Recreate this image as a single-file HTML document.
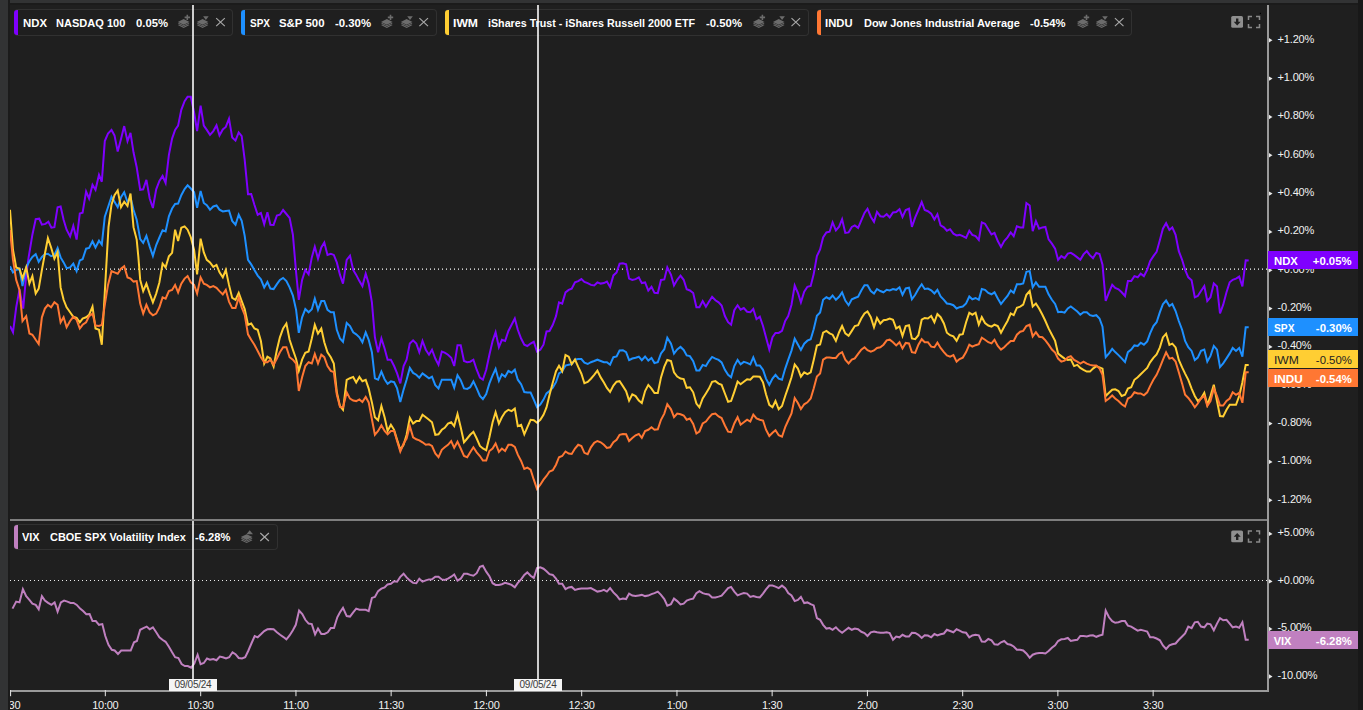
<!DOCTYPE html>
<html><head><meta charset="utf-8"><title>chart</title>
<style>
html,body{margin:0;padding:0;background:#1f1f1f;}
body{width:1363px;height:710px;position:relative;overflow:hidden;font-family:"Liberation Sans",sans-serif;color:#fff;}
.abs{position:absolute;}
#lstrip{left:0;top:0;width:8px;height:710px;background:#323334;}
#lgap{left:8px;top:0;width:2px;height:710px;background:#1b1b1b;}
#tstrip{left:10px;top:0;width:1348px;height:3px;background:#323334;}
#tgap{left:10px;top:3px;width:1348px;height:2px;background:#1b1b1b;}
#rstrip{left:1358px;top:0;width:5px;height:710px;background:#181818;}
.lg{position:absolute;box-sizing:border-box;border:1px solid #313131;border-left:none;border-radius:4px;background:#1f1f1f;}
.lg i{position:absolute;left:0;top:0;bottom:0;width:4px;border-radius:3px 0 0 3px;}
.lt{position:absolute;font-size:11px;font-weight:bold;white-space:pre;color:#fff;transform-origin:0 50%;}
.yl{position:absolute;left:1277.5px;font-size:11px;letter-spacing:-0.15px;color:#f2f2f2;white-space:pre;height:14px;line-height:14px;}
.xl{position:absolute;top:697.75px;font-size:11px;letter-spacing:-0.25px;color:#f2f2f2;white-space:pre;height:14px;line-height:14px;transform:translateX(-50%);}
.tag{position:absolute;left:1268px;width:90px;height:18px;line-height:18px;font-size:11px;font-weight:bold;color:#fff;}
.tag b{position:absolute;left:5.7px;top:1px;font-weight:bold;}
.tag em{position:absolute;right:6px;top:1px;font-style:normal;font-weight:bold;}
.db{position:absolute;top:679px;width:47px;height:12px;background:#f5f5f5;color:#3a3a3a;font-size:10px;letter-spacing:-0.25px;line-height:12px;text-align:center;}
svg{position:absolute;left:0;top:0;}
</style></head><body>
<div class="abs" id="lstrip"></div><div class="abs" id="lgap"></div>
<div class="abs" id="tstrip"></div><div class="abs" id="tgap"></div>
<div class="abs" id="rstrip"></div>

<div class="lg" style="left:14px;top:9px;width:219px;height:27px"><i style="background:#7f00ff"></i></div><span class="lt" style="left:22.5px;top:10px;height:26px;line-height:26px;transform:scaleX(1.033)">NDX</span><span class="lt" style="left:56.4px;top:10px;height:26px;line-height:26px;transform:scaleX(1.003)">NASDAQ 100</span><span class="lt" style="left:135.7px;top:10px;height:26px;line-height:26px;transform:scaleX(1.026)">0.05%</span>
<div class="lg" style="left:241px;top:9px;width:196px;height:27px"><i style="background:#1e90ff"></i></div><span class="lt" style="left:249.5px;top:10px;height:26px;line-height:26px;transform:scaleX(0.908)">SPX</span><span class="lt" style="left:279.4px;top:10px;height:26px;line-height:26px;transform:scaleX(1.038)">S&amp;P 500</span><span class="lt" style="left:335.3px;top:10px;height:26px;line-height:26px;transform:scaleX(1.033)">-0.30%</span>
<div class="lg" style="left:445px;top:9px;width:364px;height:27px"><i style="background:#ffce33"></i></div><span class="lt" style="left:452.6px;top:10px;height:26px;line-height:26px;transform:scaleX(1.106)">IWM</span><span class="lt" style="left:488px;top:10px;height:26px;line-height:26px;transform:scaleX(0.973)">iShares Trust - iShares Russell 2000 ETF</span><span class="lt" style="left:706px;top:10px;height:26px;line-height:26px;transform:scaleX(1.033)">-0.50%</span>
<div class="lg" style="left:817px;top:9px;width:314.5px;height:27px"><i style="background:#ff7733"></i></div><span class="lt" style="left:825.3px;top:10px;height:26px;line-height:26px;transform:scaleX(1.023)">INDU</span><span class="lt" style="left:863.9px;top:10px;height:26px;line-height:26px;transform:scaleX(0.997)">Dow Jones Industrial Average</span><span class="lt" style="left:1030.2px;top:10px;height:26px;line-height:26px;transform:scaleX(1.021)">-0.54%</span>
<div class="lg" style="left:14px;top:524px;width:264px;height:26px"><i style="background:#c080c0"></i></div><span class="lt" style="left:22.2px;top:524px;height:26px;line-height:26px;transform:scaleX(0.998)">VIX</span><span class="lt" style="left:49.7px;top:524px;height:26px;line-height:26px;transform:scaleX(0.993)">CBOE SPX Volatility Index</span><span class="lt" style="left:195.2px;top:524px;height:26px;line-height:26px;transform:scaleX(1.016)">-6.28%</span>
<div class="yl" style="top:31.75px">+1.20%</div>
<div class="yl" style="top:69.75px">+1.00%</div>
<div class="yl" style="top:107.75px">+0.80%</div>
<div class="yl" style="top:146.75px">+0.60%</div>
<div class="yl" style="top:184.75px">+0.40%</div>
<div class="yl" style="top:222.75px">+0.20%</div>
<div class="yl" style="top:261.75px">+0.00%</div>
<div class="yl" style="top:299.75px">-0.20%</div>
<div class="yl" style="top:337.75px">-0.40%</div>
<div class="yl" style="top:376.75px">-0.60%</div>
<div class="yl" style="top:414.75px">-0.80%</div>
<div class="yl" style="top:452.75px">-1.00%</div>
<div class="yl" style="top:491.75px">-1.20%</div>
<div class="yl" style="top:524.75px">+5.00%</div>
<div class="yl" style="top:572.75px">+0.00%</div>
<div class="yl" style="top:619.75px">-5.00%</div>
<div class="yl" style="top:667.75px">-10.00%</div>
<div class="xl" style="left:10.1px">9:30</div>
<div class="xl" style="left:105.3px">10:00</div>
<div class="xl" style="left:200.6px">10:30</div>
<div class="xl" style="left:295.9px">11:00</div>
<div class="xl" style="left:391.1px">11:30</div>
<div class="xl" style="left:486.4px">12:00</div>
<div class="xl" style="left:581.6px">12:30</div>
<div class="xl" style="left:676.9px">1:00</div>
<div class="xl" style="left:772.1px">1:30</div>
<div class="xl" style="left:867.4px">2:00</div>
<div class="xl" style="left:962.6px">2:30</div>
<div class="xl" style="left:1057.8px">3:00</div>
<div class="xl" style="left:1153.1px">3:30</div>
<div class="abs" style="left:8px;top:692px;width:2px;height:18px;background:#1b1b1b"></div><div class="abs" style="left:0;top:692px;width:8px;height:18px;background:#323334"></div>
<svg width="1363" height="710" viewBox="0 0 1363 710">
<line x1="10" y1="269.2" x2="1268" y2="269.2" stroke="#ffffff" stroke-width="1.3" stroke-dasharray="1 3"/>
<line x1="10" y1="580.5" x2="1268" y2="580.5" stroke="#ececec" stroke-width="1" stroke-dasharray="1 3"/>
<clipPath id="cp"><rect x="10" y="5" width="1258" height="686"/></clipPath><g clip-path="url(#cp)">
<polyline points="10.0,326.0 13.0,332.3 16.2,307.3 19.5,289.4 23.2,308.6 26.2,274.9 28.7,256.9 32.4,234.7 35.7,219.2 39.2,218.7 41.9,224.7 45.4,223.9 48.4,221.7 51.4,227.7 54.4,227.2 57.6,207.2 60.6,206.5 63.6,219.7 66.6,229.7 70.1,236.4 73.3,225.9 76.6,239.6 79.8,213.5 82.6,212.7 86.1,191.5 89.1,198.5 92.5,184.8 95.5,189.8 99.0,174.8 101.8,181.8 104.8,141.1 108.0,133.6 111.5,129.9 114.5,135.4 117.7,151.6 121.0,139.1 124.2,126.1 127.5,141.1 130.5,132.9 133.5,152.3 136.7,167.3 140.2,189.8 143.2,189.3 146.4,179.8 149.7,198.5 152.9,208.0 156.2,189.3 159.4,181.0 162.6,176.0 165.6,183.0 168.9,154.8 172.1,138.6 175.1,129.9 178.1,125.6 181.3,109.9 184.6,101.2 187.6,96.7 190.8,96.7 194.1,112.4 197.1,131.1 200.6,105.7 203.8,125.6 206.8,129.9 210.0,134.9 213.3,131.1 216.5,125.4 219.5,135.4 222.8,129.4 225.8,126.9 229.0,118.7 232.2,137.4 235.5,140.6 238.7,132.4 241.7,136.1 244.7,159.8 248.0,194.2 251.2,194.0 254.4,204.7 257.7,214.7 260.9,213.0 264.2,224.2 267.4,212.2 270.4,224.7 273.6,224.9 276.9,215.5 279.9,214.7 283.1,210.0 286.4,214.0 289.6,217.9 292.9,234.7 296.1,272.4 298.8,299.8 302.1,279.9 305.3,269.9 308.6,274.4 311.8,257.4 314.8,246.7 318.0,258.7 321.3,247.5 324.3,242.5 327.5,254.9 330.8,253.7 333.8,254.9 336.8,262.4 340.0,274.9 343.0,283.6 346.7,259.9 350.0,255.7 353.2,269.9 356.2,274.9 359.4,281.1 362.4,286.1 365.7,273.7 368.7,283.6 371.9,302.3 374.9,337.3 378.1,352.2 381.4,338.5 384.6,348.5 387.6,359.7 390.9,359.7 394.1,366.0 397.1,373.4 400.3,383.4 403.6,366.0 406.6,359.7 409.8,343.5 413.1,340.3 416.3,343.5 419.3,352.2 422.5,341.0 425.8,349.7 429.0,354.7 432.0,349.7 435.3,358.5 438.5,364.7 441.8,351.5 444.7,352.7 448.0,354.7 451.2,357.7 454.2,366.0 457.5,345.2 460.7,345.2 464.0,361.0 467.2,362.2 470.2,361.7 473.4,359.7 476.7,369.7 479.9,377.7 482.9,379.7 486.2,369.7 489.4,354.7 492.6,341.0 495.6,332.3 498.9,347.2 501.9,339.8 505.1,341.0 508.4,331.0 511.6,324.8 514.8,318.6 517.8,329.8 521.1,338.5 524.3,344.7 527.3,346.0 530.6,343.5 533.8,341.8 537.0,351.5 540.3,349.7 543.5,344.7 546.5,331.5 549.5,331.0 552.8,324.8 556.0,316.1 559.0,302.3 562.2,303.6 565.5,292.4 568.7,289.9 571.7,288.6 575.0,282.4 578.2,281.1 581.4,279.1 584.4,281.9 587.7,283.1 590.9,284.9 594.2,285.4 597.4,282.4 600.7,283.6 603.9,283.1 606.9,281.6 610.1,286.9 613.4,275.4 616.6,272.4 619.6,263.7 622.9,263.2 626.1,264.2 629.1,278.6 632.3,279.9 635.6,279.1 638.8,277.4 641.8,283.1 645.1,282.4 648.3,290.6 651.5,286.9 654.5,292.9 657.8,293.1 661.0,279.9 664.3,279.4 667.3,267.4 671.0,274.8 674.0,285.5 677.2,279.8 680.5,275.6 683.7,279.8 686.7,289.3 689.9,290.5 693.2,293.0 696.4,307.2 699.4,307.2 702.7,301.0 705.9,306.7 708.9,301.8 712.1,296.8 715.4,300.3 718.6,302.3 721.6,305.5 724.9,316.0 728.1,322.2 731.1,324.7 734.3,310.2 737.6,305.2 740.6,309.7 743.8,308.0 747.1,311.7 750.3,312.2 753.3,309.0 756.5,319.2 759.8,316.7 763.0,326.0 766.0,337.2 769.3,349.6 772.5,337.2 775.5,332.9 778.7,332.9 782.0,330.9 785.2,321.0 788.2,316.0 791.5,304.7 794.7,285.5 797.9,292.8 800.9,302.3 804.2,291.8 807.4,286.8 810.7,286.0 813.7,274.1 816.9,256.1 820.1,249.4 823.1,237.4 826.4,232.4 829.6,231.7 832.6,222.4 835.9,230.4 839.1,226.7 842.1,219.2 845.3,232.9 848.6,232.4 851.8,226.9 854.8,225.4 858.1,227.9 861.3,220.4 864.5,212.9 867.5,208.7 870.8,216.7 874.0,221.9 877.0,212.0 880.3,216.2 883.5,216.7 886.7,214.2 889.7,217.4 893.0,212.5 896.2,212.0 899.5,209.2 902.5,216.9 905.7,210.0 909.0,208.7 911.9,226.9 915.2,217.4 918.4,210.0 921.7,202.0 924.7,210.0 927.9,211.2 931.2,213.7 934.4,219.4 937.4,214.2 940.6,225.4 943.9,227.4 946.9,230.7 950.1,229.2 953.4,233.7 956.6,235.4 959.6,234.9 962.8,236.1 966.1,237.9 969.3,230.7 972.3,234.9 975.6,236.1 978.8,239.9 981.8,222.4 985.0,223.7 988.3,229.2 991.5,234.4 994.5,232.9 997.8,241.1 1001.0,246.9 1004.2,241.1 1007.5,237.4 1010.7,232.4 1013.7,236.1 1016.9,226.2 1020.2,227.4 1023.2,227.4 1026.4,203.0 1029.7,205.5 1032.7,231.2 1035.9,221.2 1039.1,228.7 1042.4,227.4 1045.4,226.9 1048.6,239.4 1051.9,243.6 1055.1,248.6 1058.1,259.8 1061.3,256.1 1064.6,258.1 1067.8,253.6 1070.8,252.9 1074.1,254.9 1077.3,257.4 1080.3,259.8 1083.5,254.4 1086.8,251.1 1090.0,255.4 1093.0,258.1 1096.3,252.9 1099.5,254.1 1102.5,264.8 1105.7,301.0 1109.0,292.3 1112.2,284.8 1115.2,288.0 1118.5,289.3 1121.7,292.3 1125.0,296.0 1127.9,281.0 1131.2,281.0 1134.4,276.1 1137.7,277.3 1140.7,273.6 1143.9,276.1 1147.2,269.8 1150.1,261.1 1153.4,256.1 1156.6,251.9 1159.9,239.9 1162.9,228.7 1166.1,223.2 1169.4,229.9 1172.3,227.4 1175.6,234.9 1178.8,251.1 1182.1,259.8 1185.1,269.8 1188.3,277.3 1191.6,280.3 1194.8,297.3 1197.8,296.0 1201.0,291.0 1204.3,286.0 1207.3,301.0 1210.5,297.3 1213.8,283.5 1217.0,286.5 1220.0,313.5 1223.2,304.7 1226.5,292.3 1229.7,282.3 1232.7,279.8 1236.0,278.6 1239.2,276.6 1242.4,286.5 1245.7,260.3 1248.7,260.6" fill="none" stroke="#7f00ff" stroke-width="2" stroke-linejoin="miter" stroke-miterlimit="4" stroke-linecap="butt"/>
<polyline points="10.0,266.2 13.0,272.4 16.2,269.9 19.5,268.7 22.5,286.1 26.2,267.4 29.4,261.2 32.4,256.9 35.7,254.2 38.7,261.9 41.9,256.9 44.9,254.2 47.9,253.7 51.1,256.2 54.4,254.9 57.6,248.0 60.6,257.4 63.6,262.4 66.6,268.2 70.1,267.4 73.3,263.7 76.6,271.2 79.8,260.4 82.6,259.2 86.1,248.7 89.1,248.0 92.5,241.2 95.5,247.5 99.0,240.7 101.8,244.5 104.8,216.7 108.0,207.2 111.5,196.7 114.5,201.7 117.7,207.2 121.0,197.2 124.2,192.3 127.5,202.2 130.5,197.2 133.5,209.7 136.7,219.7 140.2,239.1 143.2,242.9 146.4,235.9 149.7,246.6 152.9,255.9 156.2,245.0 159.4,237.5 162.6,230.2 165.6,231.4 168.9,216.4 172.1,208.5 175.1,204.0 178.1,203.5 181.3,195.2 184.6,189.0 187.6,185.3 190.8,188.5 194.1,192.3 197.1,207.7 200.6,191.0 203.8,203.0 206.8,205.2 210.0,209.7 213.3,206.5 216.5,205.5 219.5,209.7 222.8,211.5 225.8,211.0 229.0,210.5 232.2,220.9 235.5,224.7 238.7,214.7 241.7,220.9 244.7,235.9 248.0,259.9 251.2,264.4 254.4,269.9 257.7,275.6 260.9,279.4 264.2,287.4 267.4,281.9 270.4,288.6 273.6,289.1 276.9,284.1 279.9,279.9 283.1,277.9 286.4,281.1 289.6,287.4 292.9,295.6 296.1,309.8 298.8,332.8 302.1,317.3 305.3,309.1 308.6,312.3 311.8,309.3 314.8,298.6 318.0,309.8 321.3,301.1 324.3,301.1 327.5,309.8 330.8,312.3 333.8,312.3 336.8,329.8 340.0,338.5 343.0,341.8 346.7,323.0 350.0,326.0 353.2,332.3 356.2,334.3 359.4,337.3 362.4,342.3 365.7,332.3 368.7,339.8 371.9,352.2 374.9,378.4 378.1,379.7 381.4,371.7 384.6,379.2 387.6,383.9 390.9,381.4 394.1,382.2 397.1,388.4 400.3,402.1 403.6,389.6 406.6,379.7 409.8,367.9 413.1,372.9 416.3,374.7 419.3,377.7 422.5,373.4 425.8,375.9 429.0,378.4 432.0,376.7 435.3,385.2 438.5,388.4 441.8,379.7 444.7,379.7 448.0,379.7 451.2,379.7 454.2,387.7 457.5,375.2 460.7,380.2 464.0,388.4 467.2,388.9 470.2,387.2 473.4,381.4 476.7,388.4 479.9,395.9 482.9,399.1 486.2,394.1 489.4,383.4 492.6,375.4 495.6,368.9 498.9,380.9 501.9,374.2 505.1,376.7 508.4,370.9 511.6,372.7 514.8,369.7 517.8,379.7 521.1,384.2 524.3,392.1 527.3,392.6 530.6,392.6 533.8,399.6 537.0,407.1 540.3,404.6 543.5,399.6 546.5,393.4 549.5,390.9 552.8,387.7 556.0,382.2 559.0,373.4 562.2,371.4 565.5,365.5 568.7,364.7 571.7,364.2 575.0,359.7 578.2,359.0 581.4,359.0 584.4,362.7 587.7,364.0 590.9,362.2 594.2,361.0 597.4,359.7 600.7,361.0 603.9,362.2 606.9,362.2 610.1,364.7 613.4,357.2 616.6,356.5 619.6,350.5 622.9,350.2 626.1,352.2 629.1,360.2 632.3,358.5 635.6,357.7 638.8,356.7 641.8,360.2 645.1,356.5 648.3,360.5 651.5,358.0 654.5,363.0 657.8,362.2 661.0,353.5 664.3,349.2 667.3,337.8 671.0,343.7 674.0,353.6 677.2,349.4 680.5,346.9 683.7,349.9 686.7,355.4 689.9,356.1 693.2,361.1 696.4,370.6 699.4,370.6 702.7,364.9 705.9,366.1 708.9,361.1 712.1,356.9 715.4,358.6 718.6,359.9 721.6,362.4 724.9,369.8 728.1,374.8 731.1,377.3 734.3,366.1 737.6,359.9 740.6,364.4 743.8,361.9 747.1,362.9 750.3,364.4 753.3,357.4 756.5,365.4 759.8,365.4 763.0,369.8 766.0,378.6 769.3,384.8 772.5,378.6 775.5,374.8 778.7,378.6 782.0,379.8 785.2,368.6 788.2,359.9 791.5,350.6 794.7,338.7 797.9,344.4 800.9,349.9 804.2,343.7 807.4,340.7 810.7,339.2 813.7,329.2 816.9,315.7 820.1,312.5 823.1,299.8 826.4,297.3 829.6,299.0 832.6,295.5 835.9,299.8 839.1,296.8 842.1,292.3 845.3,300.5 848.6,305.2 851.8,299.3 854.8,298.0 858.1,296.8 861.3,290.5 864.5,285.3 867.5,285.3 870.8,291.0 874.0,293.5 877.0,289.0 880.3,291.0 883.5,292.3 886.7,289.8 889.7,290.5 893.0,289.0 896.2,289.8 899.5,287.3 902.5,294.8 905.7,288.5 909.0,287.8 911.9,299.3 915.2,294.8 918.4,289.0 921.7,284.3 924.7,289.0 927.9,288.5 931.2,290.3 934.4,293.5 937.4,289.8 940.6,296.5 943.9,299.8 946.9,303.5 950.1,304.0 953.4,305.2 956.6,308.5 959.6,307.2 962.8,306.5 966.1,303.5 969.3,296.5 972.3,299.3 975.6,298.0 978.8,299.8 981.8,289.0 985.0,289.8 988.3,293.0 991.5,294.3 994.5,292.3 997.8,298.5 1001.0,304.0 1004.2,299.8 1007.5,296.0 1010.7,290.5 1013.7,292.8 1016.9,284.3 1020.2,284.3 1023.2,283.5 1026.4,271.8 1029.7,271.1 1032.7,287.3 1035.9,282.3 1039.1,286.8 1042.4,286.8 1045.4,286.8 1048.6,294.3 1051.9,299.8 1055.1,304.0 1058.1,312.2 1061.3,311.7 1064.6,312.7 1067.8,308.5 1070.8,306.5 1074.1,309.0 1077.3,311.5 1080.3,314.7 1083.5,312.2 1086.8,312.2 1090.0,315.2 1093.0,316.0 1096.3,315.2 1099.5,318.5 1102.5,326.7 1105.7,357.1 1109.0,353.4 1112.2,348.9 1115.2,352.1 1118.5,355.1 1121.7,358.4 1125.0,362.1 1127.9,352.1 1131.2,349.6 1134.4,345.4 1137.7,345.9 1140.7,342.7 1143.9,344.7 1147.2,341.4 1150.1,333.4 1153.4,326.0 1156.6,322.2 1159.9,312.2 1162.9,304.2 1166.1,300.5 1169.4,306.0 1172.3,304.0 1175.6,311.0 1178.8,321.0 1182.1,329.7 1185.1,340.9 1188.3,347.2 1191.6,350.9 1194.8,360.1 1197.8,357.6 1201.0,350.9 1204.3,349.6 1207.3,361.6 1210.5,355.9 1213.8,345.9 1217.0,349.6 1220.0,367.1 1223.2,363.4 1226.5,358.4 1229.7,353.4 1232.7,347.9 1236.0,350.9 1239.2,347.9 1242.4,356.6 1245.7,327.2 1248.7,327.2" fill="none" stroke="#1e90ff" stroke-width="2" stroke-linejoin="miter" stroke-miterlimit="4" stroke-linecap="butt"/>
<polyline points="10.0,209.7 13.0,250.0 16.2,267.4 19.5,268.7 22.5,278.6 26.2,267.4 29.4,283.6 32.4,276.1 35.7,293.6 38.7,288.6 41.9,269.9 44.9,253.7 47.9,238.2 51.1,247.5 54.4,258.7 57.6,252.0 60.6,287.4 63.6,299.8 66.6,307.3 70.1,312.3 73.3,316.8 76.6,317.8 79.8,322.3 82.6,318.6 86.1,317.3 89.1,314.8 92.5,306.6 95.5,328.5 99.0,329.8 101.8,344.7 104.8,292.4 108.5,227.2 111.5,204.7 114.5,195.2 117.7,190.5 121.0,207.2 124.2,201.7 127.5,206.0 130.5,193.5 133.5,227.2 136.7,239.6 138.4,257.4 140.2,279.9 143.2,291.1 146.4,283.6 149.7,293.6 152.9,302.3 156.2,293.6 159.4,282.4 162.6,263.7 165.6,267.4 168.9,256.2 172.1,252.9 175.1,229.7 178.1,240.9 181.3,227.7 184.6,226.4 187.6,229.7 190.8,237.2 194.1,250.0 197.1,274.4 200.6,238.7 203.8,252.5 206.8,259.9 210.0,262.4 213.3,266.9 216.5,264.9 219.5,272.4 222.8,277.4 225.8,269.9 229.0,284.9 232.2,297.9 235.5,299.8 238.7,292.9 241.7,301.1 244.7,309.1 248.0,324.8 251.2,323.5 254.4,328.5 257.7,329.8 260.9,341.0 264.2,363.5 267.4,356.7 270.4,358.5 273.6,366.4 276.9,349.7 279.9,337.3 283.1,328.5 286.4,323.5 289.6,339.8 292.9,349.7 296.1,359.0 298.8,370.9 302.1,359.7 305.3,352.7 308.6,351.5 311.8,338.5 314.8,324.8 318.0,333.5 321.3,328.5 324.3,342.3 327.5,352.2 330.8,357.2 333.8,363.5 336.8,392.1 340.0,406.1 343.0,409.8 346.7,379.9 350.0,378.2 353.2,376.9 356.2,382.4 359.4,376.9 362.4,381.2 365.7,379.9 368.7,388.6 371.9,402.4 374.9,417.3 378.1,420.3 381.4,406.1 384.6,417.3 387.6,431.0 390.9,424.8 394.1,429.8 397.1,439.8 400.3,449.8 403.6,444.8 406.6,434.8 409.8,417.8 413.1,423.6 416.3,421.1 419.3,421.1 422.5,414.8 425.8,417.3 429.0,419.8 432.0,422.3 435.3,434.8 438.5,434.3 441.8,429.8 444.7,427.8 448.0,423.6 451.2,422.3 454.2,426.1 457.5,414.1 460.7,427.3 464.0,442.3 467.2,438.5 470.2,434.8 473.4,431.8 476.7,438.5 479.9,446.0 482.9,448.5 486.2,450.3 489.4,437.3 492.6,422.3 495.6,412.3 498.9,423.6 501.9,417.3 505.1,412.3 508.4,409.8 511.6,411.1 514.8,408.6 517.8,426.1 521.1,424.8 524.3,434.3 527.3,427.3 530.6,419.8 533.8,420.3 537.0,422.8 540.3,419.8 543.5,414.8 546.5,407.4 549.5,394.9 552.8,382.4 556.0,371.2 559.0,365.7 562.2,371.2 565.5,355.0 568.7,356.7 571.7,364.2 575.0,359.5 578.2,366.9 581.4,373.7 584.4,383.2 587.7,381.9 590.9,378.7 594.2,374.9 597.4,370.7 600.7,377.4 603.9,382.4 606.9,387.9 610.1,391.9 613.4,385.6 616.6,381.7 619.6,381.2 622.9,386.1 626.1,391.1 629.1,400.6 632.3,394.4 635.6,396.1 638.8,400.6 641.8,403.1 645.1,391.1 648.3,384.9 651.5,388.6 654.5,393.1 657.8,393.1 661.0,377.4 664.3,366.7 667.3,360.0 671.0,361.1 674.0,372.3 677.2,376.6 680.5,378.6 683.7,379.1 686.7,387.8 689.9,387.3 693.2,392.3 696.4,403.5 699.4,407.3 702.7,398.5 705.9,393.5 708.9,388.6 712.1,381.8 715.4,381.1 718.6,383.6 721.6,384.8 724.9,393.5 728.1,401.8 731.1,401.0 734.3,391.8 737.6,381.6 740.6,384.3 743.8,381.8 747.1,379.3 750.3,379.8 753.3,376.6 756.5,376.6 759.8,376.8 763.0,382.3 766.0,394.3 769.3,404.8 772.5,407.3 775.5,401.0 778.7,409.3 782.0,406.0 785.2,396.0 788.2,387.3 791.5,377.3 794.7,364.4 797.9,368.6 800.9,376.6 804.2,372.3 807.4,374.1 810.7,372.3 813.7,359.9 816.9,345.6 820.1,344.4 823.1,332.7 826.4,330.9 829.6,333.4 832.6,334.7 835.9,340.9 839.1,332.2 842.1,326.0 845.3,333.4 848.6,335.9 851.8,330.9 854.8,326.0 858.1,325.2 861.3,318.5 864.5,313.5 867.5,311.5 870.8,317.2 874.0,327.2 877.0,318.0 880.3,323.5 883.5,320.2 886.7,319.7 889.7,318.5 893.0,319.7 896.2,328.4 899.5,326.4 902.5,335.9 905.7,326.0 909.0,325.2 911.9,338.4 915.2,339.2 918.4,335.2 921.7,319.7 924.7,318.0 927.9,318.5 931.2,316.0 934.4,322.2 937.4,314.0 940.6,317.2 943.9,323.5 946.9,332.7 950.1,335.2 953.4,336.4 956.6,340.9 959.6,334.7 962.8,334.2 966.1,322.2 969.3,312.7 972.3,314.7 975.6,312.7 978.8,324.7 981.8,317.2 985.0,323.0 988.3,325.5 991.5,326.7 994.5,324.7 997.8,326.0 1001.0,332.7 1004.2,326.7 1007.5,321.0 1010.7,313.5 1013.7,315.2 1016.9,307.7 1020.2,306.7 1023.2,304.7 1026.4,294.8 1029.7,291.0 1032.7,306.5 1035.9,303.5 1039.1,308.5 1042.4,314.7 1045.4,321.0 1048.6,328.4 1051.9,334.7 1055.1,340.9 1058.1,353.6 1061.3,356.1 1064.6,358.6 1067.8,359.9 1070.8,359.4 1074.1,366.1 1077.3,364.9 1080.3,367.9 1083.5,369.8 1086.8,371.6 1090.0,371.6 1093.0,368.6 1096.3,366.1 1099.5,367.4 1102.5,368.6 1105.7,396.0 1109.0,392.8 1112.2,389.8 1115.2,389.3 1118.5,391.0 1121.7,396.0 1125.0,394.8 1127.9,388.6 1131.2,387.3 1134.4,379.8 1137.7,377.3 1140.7,374.3 1143.9,371.1 1147.2,367.9 1150.1,362.4 1153.4,357.9 1156.6,354.4 1159.9,347.4 1162.9,337.4 1166.1,333.7 1169.4,344.9 1172.3,343.7 1175.6,347.4 1178.8,359.9 1182.1,367.4 1185.1,373.6 1188.3,379.8 1191.6,388.6 1194.8,396.0 1197.8,401.0 1201.0,398.5 1204.3,392.8 1207.3,404.8 1210.5,396.0 1213.8,384.8 1217.0,401.0 1220.0,416.0 1223.2,416.5 1226.5,409.8 1229.7,404.8 1232.7,404.8 1236.0,404.8 1239.2,396.0 1242.4,382.3 1245.7,364.9 1248.7,364.9" fill="none" stroke="#ffce33" stroke-width="2" stroke-linejoin="miter" stroke-miterlimit="4" stroke-linecap="butt"/>
<polyline points="10.0,230.0 13.0,259.9 16.2,279.9 19.5,289.9 22.5,321.0 26.2,316.1 29.4,333.5 32.4,334.8 35.7,339.8 38.7,344.0 41.9,317.3 44.9,308.6 47.9,304.8 51.1,307.3 54.4,302.3 57.6,304.8 60.6,322.3 63.6,317.3 66.6,327.3 70.1,321.0 73.3,316.8 76.6,319.8 79.8,328.5 82.6,324.8 86.1,322.3 89.1,316.1 92.5,313.6 95.5,325.5 99.0,326.0 101.8,324.8 104.8,304.8 108.0,284.9 111.5,271.2 114.5,272.4 117.7,273.7 121.0,268.7 124.2,266.2 127.5,277.4 130.5,278.6 133.5,281.6 136.7,281.1 140.2,303.6 143.2,313.6 146.4,304.8 149.7,312.3 152.9,315.3 156.2,313.6 159.4,307.3 162.6,297.4 165.6,298.6 168.9,291.1 172.1,289.9 175.1,284.9 178.1,292.4 181.3,283.6 184.6,278.6 187.6,276.1 190.8,282.4 194.1,284.9 197.1,293.6 200.6,277.4 203.8,283.6 206.8,284.9 210.0,287.4 213.3,286.1 216.5,287.9 219.5,291.1 222.8,294.4 225.8,289.9 229.0,301.6 232.2,308.1 235.5,308.1 238.7,297.4 241.7,307.3 244.7,314.8 248.0,334.3 251.2,339.8 254.4,344.7 257.7,351.0 260.9,357.2 264.2,362.2 267.4,362.2 270.4,359.7 273.6,364.7 276.9,358.5 279.9,352.2 283.1,347.2 286.4,347.2 289.6,357.2 292.9,359.7 296.1,363.5 298.8,390.9 302.1,377.2 305.3,366.0 308.6,362.2 311.8,363.5 314.8,354.0 318.0,363.5 321.3,354.7 324.3,357.2 327.5,366.0 330.8,370.9 333.8,372.2 336.8,394.6 340.0,406.9 343.0,407.4 346.7,392.4 350.0,398.6 353.2,400.6 356.2,401.1 359.4,399.4 362.4,401.9 365.7,396.9 368.7,402.4 371.9,419.3 374.9,434.8 378.1,431.0 381.4,425.3 384.6,431.0 387.6,434.3 390.9,431.0 394.1,431.0 397.1,441.0 400.3,451.5 403.6,443.5 406.6,438.5 409.8,426.1 413.1,437.3 416.3,439.3 419.3,440.3 422.5,442.3 425.8,444.8 429.0,444.3 432.0,446.0 435.3,453.5 438.5,457.2 441.8,449.8 444.7,447.3 448.0,444.8 451.2,441.0 454.2,447.8 457.5,441.8 460.7,448.5 464.0,456.0 467.2,457.2 470.2,452.3 473.4,447.3 476.7,452.3 479.9,456.0 482.9,460.5 486.2,460.5 489.4,451.0 492.6,448.5 495.6,443.5 498.9,451.8 501.9,448.5 505.1,451.0 508.4,444.8 511.6,444.8 514.8,446.8 517.8,454.7 521.1,461.0 524.3,469.0 527.3,467.7 530.6,469.7 533.8,479.7 537.0,488.9 540.3,484.7 543.5,479.7 546.5,476.0 549.5,471.5 552.8,470.2 556.0,464.7 559.0,457.2 562.2,456.0 565.5,451.5 568.7,453.5 571.7,454.0 575.0,448.5 578.2,444.8 581.4,446.0 584.4,452.8 587.7,454.2 590.9,447.3 594.2,442.8 597.4,441.0 600.7,442.3 603.9,444.8 606.9,448.0 610.1,447.3 613.4,442.3 616.6,439.8 619.6,434.8 622.9,434.0 626.1,434.3 629.1,441.0 632.3,438.0 635.6,435.3 638.8,434.0 641.8,437.8 645.1,431.0 648.3,429.8 651.5,427.3 654.5,429.8 657.8,429.3 661.0,419.8 664.3,413.6 667.3,404.1 671.0,409.3 674.0,417.2 677.2,413.5 680.5,414.2 683.7,415.5 686.7,419.7 689.9,418.5 693.2,424.0 696.4,433.5 699.4,431.5 702.7,423.5 705.9,421.5 708.9,417.7 712.1,414.2 715.4,413.5 718.6,416.5 721.6,418.0 724.9,425.5 728.1,431.7 731.1,432.2 734.3,423.5 737.6,417.2 740.6,424.7 743.8,422.2 747.1,419.7 750.3,421.5 753.3,414.7 756.5,418.5 759.8,419.7 763.0,420.5 766.0,429.7 769.3,436.0 772.5,432.7 775.5,430.2 778.7,435.2 782.0,436.7 785.2,427.2 788.2,420.5 791.5,413.5 794.7,398.0 797.9,403.0 800.9,409.0 804.2,404.3 807.4,402.3 810.7,398.5 813.7,388.6 816.9,376.6 820.1,373.6 823.1,359.6 826.4,357.6 829.6,357.6 832.6,357.9 835.9,357.9 839.1,353.9 842.1,352.1 845.3,359.6 848.6,363.4 851.8,359.6 854.8,358.4 858.1,353.9 861.3,349.6 864.5,347.2 867.5,350.1 870.8,351.6 874.0,350.4 877.0,347.9 880.3,347.2 883.5,344.7 886.7,340.4 889.7,339.7 893.0,342.2 896.2,345.4 899.5,342.2 902.5,348.4 905.7,342.9 909.0,343.4 911.9,352.1 915.2,352.9 918.4,344.7 921.7,339.2 924.7,342.2 927.9,342.2 931.2,346.7 934.4,347.2 937.4,342.7 940.6,347.9 943.9,352.1 946.9,355.4 950.1,356.6 953.4,355.1 956.6,361.6 959.6,359.1 962.8,357.6 966.1,352.1 969.3,344.7 972.3,346.7 975.6,345.2 978.8,344.2 981.8,337.7 985.0,339.7 988.3,342.2 991.5,343.4 994.5,339.7 997.8,345.9 1001.0,349.6 1004.2,347.2 1007.5,343.9 1010.7,340.9 1013.7,340.9 1016.9,334.7 1020.2,331.7 1023.2,330.9 1026.4,326.0 1029.7,324.7 1032.7,336.4 1035.9,332.2 1039.1,336.7 1042.4,337.2 1045.4,340.4 1048.6,344.7 1051.9,349.6 1055.1,352.6 1058.1,358.6 1061.3,361.6 1064.6,360.6 1067.8,357.4 1070.8,356.1 1074.1,359.9 1077.3,361.6 1080.3,363.6 1083.5,361.6 1086.8,363.6 1090.0,364.9 1093.0,365.4 1096.3,365.4 1099.5,368.6 1102.5,374.8 1105.7,401.0 1109.0,398.5 1112.2,395.5 1115.2,398.5 1118.5,401.0 1121.7,404.3 1125.0,406.5 1127.9,398.5 1131.2,396.8 1134.4,392.3 1137.7,393.5 1140.7,393.5 1143.9,395.3 1147.2,392.3 1150.1,386.1 1153.4,379.8 1156.6,374.8 1159.9,367.4 1162.9,359.9 1166.1,352.4 1169.4,358.6 1172.3,357.9 1175.6,361.6 1178.8,372.3 1182.1,383.6 1185.1,394.8 1188.3,398.0 1191.6,402.3 1194.8,407.3 1197.8,403.5 1201.0,398.5 1204.3,396.0 1207.3,406.0 1210.5,401.0 1213.8,388.6 1217.0,396.0 1220.0,405.5 1223.2,405.5 1226.5,401.0 1229.7,398.5 1232.7,392.3 1236.0,394.8 1239.2,392.8 1242.4,402.8 1245.7,372.3 1248.7,372.3" fill="none" stroke="#ff7733" stroke-width="2" stroke-linejoin="miter" stroke-miterlimit="4" stroke-linecap="butt"/>
<polyline points="12.5,608.6 16.2,601.6 19.5,602.4 22.9,589.1 26.2,596.1 29.4,599.9 32.4,603.6 35.7,604.9 38.7,609.3 41.9,596.1 44.9,600.6 48.1,602.9 51.4,604.9 54.6,602.4 57.6,611.6 60.9,602.4 64.1,600.6 67.4,601.6 70.6,602.9 73.6,602.9 76.8,604.9 80.1,608.6 83.1,611.1 86.3,614.3 89.6,614.1 92.5,621.1 95.8,621.1 99.0,624.8 102.3,624.1 105.3,636.0 108.5,644.8 111.8,649.8 114.7,650.5 118.0,654.0 121.2,650.5 124.5,650.5 127.5,650.5 130.7,650.5 134.0,642.3 136.9,641.0 140.2,629.8 143.4,628.1 146.7,626.6 149.7,629.3 152.9,627.3 156.2,632.3 159.4,637.3 162.4,639.8 165.6,641.8 168.9,646.8 172.1,652.3 175.1,657.2 178.4,658.0 181.6,664.0 184.8,666.0 187.8,666.0 191.1,667.7 194.3,663.5 197.6,654.7 200.6,664.2 203.8,663.0 207.0,658.5 210.0,659.7 213.3,659.0 216.5,660.2 219.8,656.5 222.8,657.2 226.0,658.5 229.2,657.2 232.5,652.3 235.5,654.2 238.7,658.0 242.0,658.5 245.2,657.2 248.2,651.0 251.4,643.5 254.7,636.0 257.7,637.3 260.9,634.3 264.2,631.0 267.4,629.3 270.4,629.1 273.6,629.3 276.9,632.3 280.1,634.8 283.1,636.8 286.4,639.3 289.6,635.5 292.9,630.3 295.8,624.8 299.1,610.6 302.3,614.1 305.3,619.8 308.6,623.6 311.8,624.1 315.1,634.3 318.0,628.6 321.3,634.0 324.5,634.0 327.8,632.3 330.8,628.1 334.0,628.1 337.3,617.3 340.0,612.3 343.0,607.9 346.7,616.1 350.0,616.6 353.2,612.3 356.2,608.6 359.4,609.8 362.4,609.8 365.7,609.8 368.7,611.1 371.9,597.9 374.9,596.9 378.1,591.1 381.4,588.6 384.6,587.4 387.6,584.4 390.9,583.7 394.1,581.2 397.1,581.7 400.3,576.9 403.6,573.7 406.6,577.4 409.8,580.4 413.1,582.9 416.3,583.2 419.3,578.7 422.5,581.7 425.8,580.4 429.0,579.4 432.0,579.2 435.3,576.7 438.5,576.7 441.8,579.4 444.7,579.9 448.0,578.7 451.2,576.7 454.2,574.4 457.5,580.7 460.7,578.7 464.0,573.7 467.2,573.7 470.2,574.9 473.4,575.7 476.7,573.2 479.9,566.9 482.9,565.7 486.2,571.7 489.4,576.2 492.6,583.2 495.6,584.9 498.9,584.9 501.9,584.2 505.1,582.9 508.4,583.7 511.6,584.9 514.8,587.4 517.8,582.9 521.1,579.4 524.3,574.9 527.3,572.4 530.6,575.7 533.8,577.9 537.0,568.2 540.3,567.4 543.5,568.7 546.5,571.2 549.5,574.2 552.8,574.9 556.0,578.7 559.0,583.7 562.2,583.7 565.5,589.1 568.7,587.4 571.7,586.9 575.0,589.9 578.2,589.1 581.4,588.6 584.4,588.6 587.7,588.6 590.9,588.1 594.2,589.9 597.4,591.6 600.7,591.1 603.9,589.9 606.9,591.6 610.1,588.1 613.4,592.4 616.6,595.4 619.6,599.4 622.9,598.6 626.1,599.1 629.1,593.6 632.3,595.6 635.6,596.1 638.8,595.4 641.8,594.9 645.1,596.1 648.3,595.6 651.5,594.1 654.5,593.1 657.8,591.6 661.0,594.9 664.3,599.1 667.3,605.6 671.0,604.1 674.0,598.6 677.2,601.1 680.5,604.4 683.7,603.6 686.7,600.6 689.9,599.4 693.2,598.6 696.4,593.1 699.4,591.1 702.7,593.1 705.9,594.1 708.9,594.4 712.1,597.4 715.4,597.4 718.6,596.6 721.6,595.6 724.9,591.9 728.1,588.1 731.1,586.9 734.3,591.6 737.6,595.4 740.6,594.1 743.8,593.1 747.1,593.6 750.3,596.9 753.3,596.1 756.5,596.9 759.8,597.4 763.0,593.6 766.0,589.4 769.3,585.6 772.5,585.6 775.5,586.6 778.7,588.1 782.0,585.6 785.2,588.1 788.2,593.1 791.5,595.4 794.7,601.1 797.9,599.9 800.9,596.9 804.2,603.1 807.4,602.4 810.7,604.1 813.7,605.4 816.9,618.1 820.1,619.8 823.1,624.8 826.4,628.6 829.6,628.1 832.6,629.8 835.9,627.3 839.1,630.6 842.1,632.8 845.3,630.3 848.6,627.8 851.8,629.8 854.8,628.6 858.1,629.3 861.3,631.8 864.5,633.0 867.5,636.0 870.8,632.3 874.0,631.5 877.0,632.3 880.3,632.8 883.5,632.8 886.7,632.3 889.7,633.0 893.0,639.8 896.2,636.5 899.5,637.3 902.5,634.8 905.7,636.5 909.0,636.5 911.9,632.8 915.2,633.0 918.4,634.8 921.7,638.0 924.7,635.3 927.9,635.5 931.2,637.3 934.4,634.0 937.4,635.5 940.6,634.3 943.9,633.5 946.9,629.8 950.1,631.0 953.4,632.3 956.6,629.3 959.6,630.6 962.8,632.3 966.1,632.8 969.3,637.3 972.3,635.5 975.6,634.8 978.8,635.3 981.8,641.5 985.0,641.8 988.3,639.0 991.5,640.3 994.5,644.3 997.8,644.8 1001.0,642.3 1004.2,641.0 1007.5,644.0 1010.7,644.8 1013.7,646.5 1016.9,649.8 1020.2,649.8 1023.2,650.5 1026.4,653.5 1029.7,657.7 1032.7,654.7 1035.9,653.5 1039.1,653.0 1042.4,653.0 1045.4,653.5 1048.6,651.0 1051.9,647.8 1055.1,645.3 1058.1,641.0 1061.3,639.3 1064.6,639.0 1067.8,638.0 1070.8,641.0 1074.1,640.3 1077.3,639.8 1080.3,636.0 1083.5,636.0 1086.8,636.5 1090.0,635.5 1093.0,635.3 1096.3,636.8 1099.5,635.5 1102.5,634.8 1105.7,610.6 1109.0,617.3 1112.2,621.1 1115.2,622.8 1118.5,622.3 1121.7,621.1 1125.0,621.1 1127.9,625.6 1131.2,626.6 1134.4,628.6 1137.7,630.6 1140.7,629.8 1143.9,630.6 1147.2,631.5 1150.1,637.3 1153.4,637.3 1156.6,638.5 1159.9,640.3 1162.9,645.5 1166.1,649.0 1169.4,645.3 1172.3,644.3 1175.6,643.5 1178.8,639.8 1182.1,636.5 1185.1,633.5 1188.3,626.6 1191.6,628.1 1194.8,622.3 1197.8,621.8 1201.0,626.6 1204.3,627.3 1207.3,623.6 1210.5,624.3 1213.8,630.3 1217.0,623.6 1220.0,618.1 1223.2,620.3 1226.5,619.8 1229.7,623.6 1232.7,627.3 1236.0,626.6 1239.2,627.8 1242.4,622.3 1245.7,639.8 1248.7,639.8" fill="none" stroke="#c080c0" stroke-width="2" stroke-linejoin="miter" stroke-miterlimit="4" stroke-linecap="butt"/>
</g>
<rect x="192" y="5" width="2" height="686" fill="#ffffff" fill-opacity="0.78"/>
<rect x="537" y="5" width="2" height="686" fill="#ffffff" fill-opacity="0.78"/>
<rect x="10" y="519" width="1258" height="2" fill="#7e7e7e"/>
<rect x="1267" y="5" width="2" height="687" fill="#9a9a9a"/>
<rect x="10" y="690" width="1259" height="2" fill="#9a9a9a"/>
<rect x="10.0" y="690" width="1.1" height="6.2" fill="#d8d8d8"/>
<rect x="104.8" y="690" width="1.1" height="6.2" fill="#d8d8d8"/>
<rect x="200.1" y="690" width="1.1" height="6.2" fill="#d8d8d8"/>
<rect x="295.4" y="690" width="1.1" height="6.2" fill="#d8d8d8"/>
<rect x="390.6" y="690" width="1.1" height="6.2" fill="#d8d8d8"/>
<rect x="485.9" y="690" width="1.1" height="6.2" fill="#d8d8d8"/>
<rect x="581.1" y="690" width="1.1" height="6.2" fill="#d8d8d8"/>
<rect x="676.4" y="690" width="1.1" height="6.2" fill="#d8d8d8"/>
<rect x="771.6" y="690" width="1.1" height="6.2" fill="#d8d8d8"/>
<rect x="866.9" y="690" width="1.1" height="6.2" fill="#d8d8d8"/>
<rect x="962.1" y="690" width="1.1" height="6.2" fill="#d8d8d8"/>
<rect x="1057.3" y="690" width="1.1" height="6.2" fill="#d8d8d8"/>
<rect x="1152.6" y="690" width="1.1" height="6.2" fill="#d8d8d8"/>
<path d="M1269 38.1 L1272.5 40.3 L1269 42.5 Z" fill="#e8e8e8"/>
<path d="M1269 76.4 L1272.5 78.6 L1269 80.8 Z" fill="#e8e8e8"/>
<path d="M1269 114.8 L1272.5 117.0 L1269 119.2 Z" fill="#e8e8e8"/>
<path d="M1269 153.1 L1272.5 155.3 L1269 157.5 Z" fill="#e8e8e8"/>
<path d="M1269 191.4 L1272.5 193.6 L1269 195.8 Z" fill="#e8e8e8"/>
<path d="M1269 229.8 L1272.5 231.9 L1269 234.1 Z" fill="#e8e8e8"/>
<path d="M1269 268.1 L1272.5 270.3 L1269 272.5 Z" fill="#e8e8e8"/>
<path d="M1269 306.4 L1272.5 308.6 L1269 310.8 Z" fill="#e8e8e8"/>
<path d="M1269 344.7 L1272.5 346.9 L1269 349.1 Z" fill="#e8e8e8"/>
<path d="M1269 383.1 L1272.5 385.3 L1269 387.5 Z" fill="#e8e8e8"/>
<path d="M1269 421.4 L1272.5 423.6 L1269 425.8 Z" fill="#e8e8e8"/>
<path d="M1269 459.7 L1272.5 461.9 L1269 464.1 Z" fill="#e8e8e8"/>
<path d="M1269 498.1 L1272.5 500.3 L1269 502.5 Z" fill="#e8e8e8"/>
<path d="M1269 531.7 L1272.5 533.9 L1269 536.1 Z" fill="#e8e8e8"/>
<path d="M1269 579.2 L1272.5 581.4 L1269 583.6 Z" fill="#e8e8e8"/>
<path d="M1269 626.8 L1272.5 629.0 L1269 631.2 Z" fill="#e8e8e8"/>
<path d="M1269 674.3 L1272.5 676.5 L1269 678.8 Z" fill="#e8e8e8"/>
<g transform="translate(177.8,18.9)" fill="#6c6c6c"><path d="M0 3.0 L5.85 0.2 L11.7 3.0 L5.85 5.8 Z"/><path d="M0 4.6 L1.3 4.0 L5.85 6.3 L10.4 4.0 L11.7 4.6 L5.85 7.4 Z"/><path d="M0 6.2 L1.3 5.6 L5.85 7.9 L10.4 5.6 L11.7 6.2 L5.85 9.0 Z"/><path d="M8.7 -4.2 h1.6 v1.9 h1.9 v1.6 h-1.9 v1.9 h-1.6 v-1.9 h-1.9 v-1.6 h1.9 Z"/></g>
<g transform="translate(196.7,18.9)" fill="#6c6c6c"><path d="M0 3.0 L5.85 0.2 L11.7 3.0 L5.85 5.8 Z"/><path d="M0 4.6 L1.3 4.0 L5.85 6.3 L10.4 4.0 L11.7 4.6 L5.85 7.4 Z"/><path d="M0 6.2 L1.3 5.6 L5.85 7.9 L10.4 5.6 L11.7 6.2 L5.85 9.0 Z"/><path d="M6.4 -2.7 h5.6 l-2.8 3.9 Z"/></g>
<path d="M216.2 18.1 l8.6 8 M224.79999999999998 18.1 l-8.6 8" stroke="#a8a8a8" stroke-width="1.15" fill="none"/>
<g transform="translate(381,18.9)" fill="#6c6c6c"><path d="M0 3.0 L5.85 0.2 L11.7 3.0 L5.85 5.8 Z"/><path d="M0 4.6 L1.3 4.0 L5.85 6.3 L10.4 4.0 L11.7 4.6 L5.85 7.4 Z"/><path d="M0 6.2 L1.3 5.6 L5.85 7.9 L10.4 5.6 L11.7 6.2 L5.85 9.0 Z"/><path d="M8.7 -4.2 h1.6 v1.9 h1.9 v1.6 h-1.9 v1.9 h-1.6 v-1.9 h-1.9 v-1.6 h1.9 Z"/></g>
<g transform="translate(400.8,18.9)" fill="#6c6c6c"><path d="M0 3.0 L5.85 0.2 L11.7 3.0 L5.85 5.8 Z"/><path d="M0 4.6 L1.3 4.0 L5.85 6.3 L10.4 4.0 L11.7 4.6 L5.85 7.4 Z"/><path d="M0 6.2 L1.3 5.6 L5.85 7.9 L10.4 5.6 L11.7 6.2 L5.85 9.0 Z"/><path d="M6.4 -2.7 h5.6 l-2.8 3.9 Z"/></g>
<path d="M419.4 18.1 l8.6 8 M428.0 18.1 l-8.6 8" stroke="#a8a8a8" stroke-width="1.15" fill="none"/>
<g transform="translate(752.9,18.9)" fill="#6c6c6c"><path d="M0 3.0 L5.85 0.2 L11.7 3.0 L5.85 5.8 Z"/><path d="M0 4.6 L1.3 4.0 L5.85 6.3 L10.4 4.0 L11.7 4.6 L5.85 7.4 Z"/><path d="M0 6.2 L1.3 5.6 L5.85 7.9 L10.4 5.6 L11.7 6.2 L5.85 9.0 Z"/><path d="M8.7 -4.2 h1.6 v1.9 h1.9 v1.6 h-1.9 v1.9 h-1.6 v-1.9 h-1.9 v-1.6 h1.9 Z"/></g>
<g transform="translate(772.9,18.9)" fill="#6c6c6c"><path d="M0 3.0 L5.85 0.2 L11.7 3.0 L5.85 5.8 Z"/><path d="M0 4.6 L1.3 4.0 L5.85 6.3 L10.4 4.0 L11.7 4.6 L5.85 7.4 Z"/><path d="M0 6.2 L1.3 5.6 L5.85 7.9 L10.4 5.6 L11.7 6.2 L5.85 9.0 Z"/><path d="M6.4 -2.7 h5.6 l-2.8 3.9 Z"/></g>
<path d="M791.5 18.1 l8.6 8 M800.1 18.1 l-8.6 8" stroke="#a8a8a8" stroke-width="1.15" fill="none"/>
<g transform="translate(1077,18.9)" fill="#6c6c6c"><path d="M0 3.0 L5.85 0.2 L11.7 3.0 L5.85 5.8 Z"/><path d="M0 4.6 L1.3 4.0 L5.85 6.3 L10.4 4.0 L11.7 4.6 L5.85 7.4 Z"/><path d="M0 6.2 L1.3 5.6 L5.85 7.9 L10.4 5.6 L11.7 6.2 L5.85 9.0 Z"/><path d="M8.7 -4.2 h1.6 v1.9 h1.9 v1.6 h-1.9 v1.9 h-1.6 v-1.9 h-1.9 v-1.6 h1.9 Z"/></g>
<g transform="translate(1095.8,18.9)" fill="#6c6c6c"><path d="M0 3.0 L5.85 0.2 L11.7 3.0 L5.85 5.8 Z"/><path d="M0 4.6 L1.3 4.0 L5.85 6.3 L10.4 4.0 L11.7 4.6 L5.85 7.4 Z"/><path d="M0 6.2 L1.3 5.6 L5.85 7.9 L10.4 5.6 L11.7 6.2 L5.85 9.0 Z"/><path d="M6.4 -2.7 h5.6 l-2.8 3.9 Z"/></g>
<path d="M1114.9 18.1 l8.6 8 M1123.5 18.1 l-8.6 8" stroke="#a8a8a8" stroke-width="1.15" fill="none"/>
<g transform="translate(240.8,534.1)" fill="#6c6c6c"><path d="M0 3.0 L5.85 0.2 L11.7 3.0 L5.85 5.8 Z"/><path d="M0 4.6 L1.3 4.0 L5.85 6.3 L10.4 4.0 L11.7 4.6 L5.85 7.4 Z"/><path d="M0 6.2 L1.3 5.6 L5.85 7.9 L10.4 5.6 L11.7 6.2 L5.85 9.0 Z"/><path d="M8.9 -3.8 l3.3 3.9 h-6.6 Z" /></g>
<path d="M260.3 533 l8.6 8 M268.90000000000003 533 l-8.6 8" stroke="#a8a8a8" stroke-width="1.15" fill="none"/>
<rect x="1231.2" y="16" width="11.8" height="11.8" rx="1.6" fill="#8f8f8f"/><path d="M1236.0 18.5 h2.4 v3.2 h2.3 l-3.5 3.8 l-3.5 -3.8 h2.3 Z" fill="#1f1f1f"/><path d="M1248.5 20.0 V16.5 H1252.0 M1256.0 16.5 H1259.5 V20.0 M1259.5 24.0 V27.5 H1256.0 M1252.0 27.5 H1248.5 V24.0" stroke="#8a8a8a" stroke-width="1.5" fill="none"/>
<rect x="1259.8" y="12.8" width="1.2" height="1.2" fill="#000"/>
<rect x="1231.2" y="530.5" width="11.8" height="11.8" rx="1.6" fill="#8f8f8f"/><path d="M1236.0 540.0 h2.4 v-3.2 h2.3 l-3.5 -3.8 l-3.5 3.8 h2.3 Z" fill="#1f1f1f"/><path d="M1248.5 534.5 V531.0 H1252.0 M1256.0 531.0 H1259.5 V534.5 M1259.5 538.5 V542.0 H1256.0 M1252.0 542.0 H1248.5 V538.5" stroke="#8a8a8a" stroke-width="1.5" fill="none"/>
</svg>
<div class="tag" style="top:251px;background:#7f00ff;color:#fff"><b style="font-weight:bold;transform:scaleX(1.03);transform-origin:0 50%">NDX</b><em style="font-weight:bold;transform:scaleX(1.033);transform-origin:100% 50%">+0.05%</em></div>
<div class="tag" style="top:318px;background:#1e90ff;color:#fff"><b style="font-weight:bold;transform:scaleX(0.93);transform-origin:0 50%">SPX</b><em style="font-weight:bold;transform:scaleX(1.033);transform-origin:100% 50%">-0.30%</em></div>
<div class="tag" style="top:350px;background:#ffce33;color:#222"><b style="font-weight:normal;transform:scaleX(1.1);transform-origin:0 50%">IWM</b><em style="font-weight:normal;transform:scaleX(1.033);transform-origin:100% 50%">-0.50%</em></div>
<div class="tag" style="top:369px;background:#ff7733;color:#fff"><b style="font-weight:bold;transform:scaleX(1.07);transform-origin:0 50%">INDU</b><em style="font-weight:bold;transform:scaleX(1.033);transform-origin:100% 50%">-0.54%</em></div>
<div class="tag" style="top:631px;background:#c080c0;color:#fff"><b style="font-weight:bold;transform:scaleX(1.0);transform-origin:0 50%">VIX</b><em style="font-weight:bold;transform:scaleX(1.033);transform-origin:100% 50%">-6.28%</em></div>
<div class="db" style="left:169.3px;width:47.3px">09/05/24</div>
<div class="db" style="left:514.2px;width:47.6px">09/05/24</div>
</body></html>
